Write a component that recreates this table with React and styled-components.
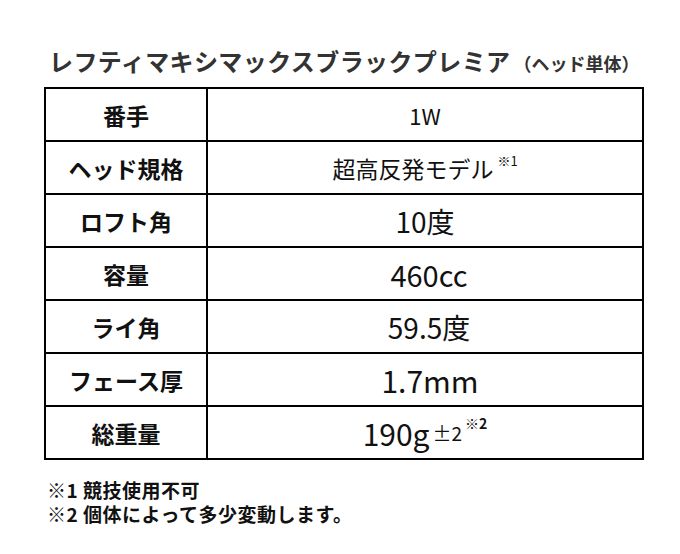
import React from "react";
import styled, { createGlobalStyle } from "styled-components";

const Global = createGlobalStyle`
  html, body { margin: 0; padding: 0; background: #fff; }
  body { font-family: "Noto Sans CJK JP", "Noto Sans", sans-serif; color: #111; }
`;

const Page = styled.div`
  width: 680px;
  height: 554px;
  box-sizing: border-box;
  padding: 49px 0 0 44px;
  display: flex;
  flex-direction: column;
`;

const Title = styled.h1`
  margin: 0 0 12px 5px;
  font-size: 24px;
  line-height: 24px;
  font-weight: 700;
  color: #333;
  letter-spacing: 0.4px;
  white-space: nowrap;
`;

const TitleSub = styled.span`
  font-size: 18px;
  font-weight: 700;
  letter-spacing: 0;
  margin-left: 3px;
`;

const Table = styled.div`
  width: 600px;
  box-sizing: border-box;
  display: grid;
  grid-template-columns: 162px 436px;
  border-left: 2px solid #000;
  border-top: 2px solid #000;
`;

const Cell = styled.div`
  height: 51px;
  box-sizing: content-box;
  border-right: 2px solid #000;
  border-bottom: 2px solid #000;
  display: flex;
  align-items: center;
  justify-content: center;
  white-space: nowrap;
`;

const Label = styled(Cell)`
  font-weight: 700;
  font-size: 23px;
  color: #111;
`;

const Value = styled(Cell)`
  font-weight: 400;
  font-size: ${(p) => p.$size || 28}px;
  color: #111;
  padding-left: ${(p) => p.$shift || 0}px;
  box-sizing: border-box;
  height: 53px;
`;

const Sup = styled.sup`
  font-size: 13px;
  font-weight: 400;
  vertical-align: 0;
  position: relative;
  top: -7px;
  margin-left: 4px;
  line-height: 0;
`;

const SupBold = styled(Sup)`
  font-weight: 700;
  font-size: 14px;
  top: -10px;
  margin-left: 3px;
`;

const Small = styled.span`
  font-size: 19px;
  margin-left: 3px;
`;

const Notes = styled.div`
  margin-top: 18px;
  margin-left: 3px;
  font-size: 19px;
  line-height: 24px;
  letter-spacing: 0.5px;
  font-weight: 700;
  color: #111;
`;

const Note = styled.div`
  white-space: nowrap;
  height: 24px;
`;

const rows = [
  ["番手", <>1W</>, 22, 0],
  ["ヘッド規格", <>超高反発モデル<Sup>※1</Sup></>, 23, 0],
  ["ロフト角", <>10度</>, 28, 0],
  ["容量", <>460cc</>, 29, 8],
  ["ライ角", <>59.5度</>, 28, 8],
  ["フェース厚", <>1.7mm</>, 30, 10],
  ["総重量", <>190g<Small>±2</Small><SupBold>※2</SupBold></>, 30, 0],
];

export default function App() {
  return (
    <>
      <Global />
      <Page>
        <Title>
          レフティマキシマックスブラックプレミア<TitleSub>（ヘッド単体）</TitleSub>
        </Title>
        <Table>
          {rows.map(([label, value, size, shift]) => (
            <React.Fragment key={label}>
              <Label>{label}</Label>
              <Value $size={size} $shift={shift}>{value}</Value>
            </React.Fragment>
          ))}
        </Table>
        <Notes>
          <Note>※1 競技使用不可</Note>
          <Note>※2 個体によって多少変動します。</Note>
        </Notes>
      </Page>
    </>
  );
}
